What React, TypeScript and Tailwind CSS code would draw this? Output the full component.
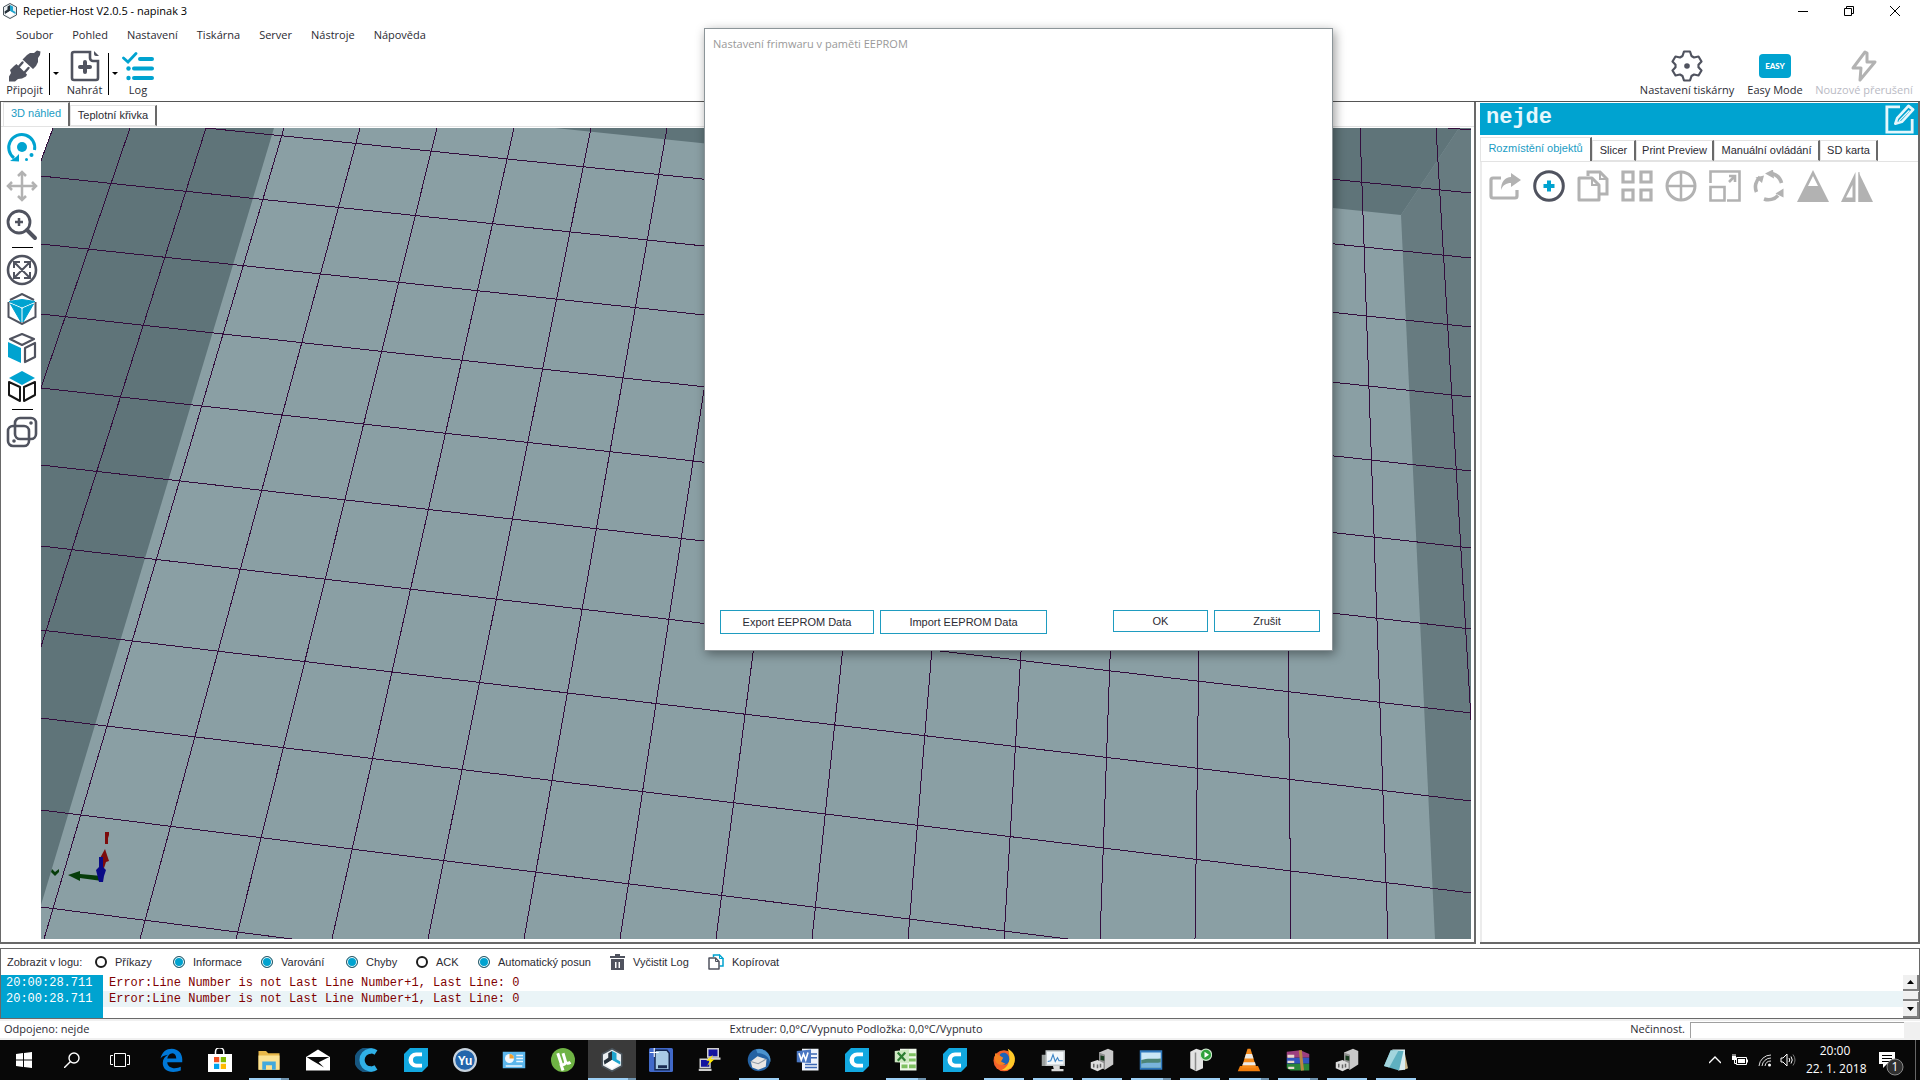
import { useState, type ReactNode } from "react";
import clsx from "clsx";

const DARK = "#50535f";
const BLUE = "#00a3d0";
const GRAY = "#b2b2b2";

/* ---------- toolbar icons ---------- */

function Icon({ children, className = "size-8" }: { children: ReactNode; className?: string }) {
  return (
    <svg viewBox="0 0 32 32" fill="none" className={clsx("shrink-0", className)} aria-hidden="true">
      {children}
    </svg>
  );
}

const PlugIcon = () => (
  <Icon>
    <path d="M13.500 9.500L18 5l3-2h4l3-2.500 3.500 1L31 5l-2 3v4l-2 4-3 3z" fill={DARK} />
    <path d="M7.500 14l10.500 10.500-1 2-4 2-4 .5-3 2.500H0v-5L2 23l-1-3 4-4z" fill={DARK} />
    <path d="M10 16.500l3.500-4M16 22l3.500-4" stroke={DARK} strokeWidth="2.400" strokeLinecap="round" />
  </Icon>
);

const LoadIcon = () => (
  <Icon>
    <path d="M21 2H5a2 2 0 0 0-2 2v24a2 2 0 0 0 2 2h22a2 2 0 0 0 2-2V11h-5a3 3 0 0 1-3-3z" stroke={DARK} strokeWidth="2.600" />
    <path d="M25 1l5 5h-3a2 2 0 0 1-2-2z" fill={DARK} />
    <path d="M16 12v10M11 17h10" stroke={DARK} strokeWidth="4" strokeLinecap="round" />
  </Icon>
);

const LogIcon = () => (
  <Icon>
    <path d="M1.500 8l4.500 4 8-8.500" stroke={BLUE} strokeWidth="2.800" strokeLinecap="round" />
    <path d="M18 9h12M12 18.500h18M12 28h18" stroke={BLUE} strokeWidth="4" strokeLinecap="round" />
    <circle cx="6.500" cy="18.500" r="2.200" fill={BLUE} />
    <circle cx="6.500" cy="28" r="2.200" fill={BLUE} />
  </Icon>
);

const GearIcon = () => (
  <Icon>
    <path
      d="M13 1.500h6l1.500 4.500 2.500 1.500 4.500-1 3 5-3 3.200v2.600l3 3.200-3 5-4.500-1-2.500 1.500-1.500 4.500h-6l-1.500-4.500L9 24.500l-4.500 1-3-5 3-3.200v-2.600l-3-3.200 3-5 4.500 1 2.500-1.500z"
      stroke={DARK}
      strokeWidth="2.200"
      strokeLinejoin="round"
    />
    <circle cx="16" cy="16" r="2.800" fill={DARK} />
  </Icon>
);

const BoltIcon = () => (
  <Icon>
    <path d="M17 2L5 18h8l-1 12 15-18h-8V3z" stroke={GRAY} strokeWidth="3" strokeLinejoin="round" />
  </Icon>
);

const EasyIcon = () => (
  <span className="flex h-8 w-8 items-center justify-center">
    <span className="flex h-6 w-8 items-center justify-center rounded bg-[#00a3d0] font-[Lato,sans-serif] text-[8px] font-black text-white">
      EASY
    </span>
  </span>
);

/* ---------- view icons (left column) ---------- */

const RotateIcon = () => (
  <Icon>
    <path d="M8 27A13 13 0 1 1 28.500 19" stroke={BLUE} strokeWidth="3" />
    <circle cx="16" cy="16" r="5" fill={BLUE} />
    <path d="M4 30l9 .5V23l-3 3z" fill={BLUE} />
    <circle cx="20.500" cy="28.500" r="1.500" fill={BLUE} />
    <circle cx="25.500" cy="24" r="2" fill={BLUE} />
  </Icon>
);

const MoveIcon = () => (
  <Icon>
    <path d="M16 2v28M2 16h28M12 6l4-4 4 4M12 26l4 4 4-4M6 12l-4 4 4 4M26 12l4 4-4 4" stroke={GRAY} strokeWidth="2.500" />
  </Icon>
);

const ZoomIcon = () => (
  <Icon>
    <circle cx="13" cy="13" r="11" stroke={DARK} strokeWidth="2.800" />
    <path d="M13 9v8M9 13h8" stroke={DARK} strokeWidth="2.500" />
    <path d="M21 21l8 8" stroke={DARK} strokeWidth="4" strokeLinecap="round" />
  </Icon>
);

const FitIcon = () => (
  <Icon>
    <circle cx="16" cy="16" r="14" stroke={DARK} strokeWidth="2.600" />
    <path d="M9 9l14 14M23 9L9 23M8 14V8h6M18 8h6v6M24 18v6h-6M14 24H8v-6" stroke={DARK} strokeWidth="2" />
  </Icon>
);

const IsoIcon = () => (
  <Icon>
    <path d="M4 7l12-6 12 6M2.500 9v15L16 31l13.500-7V9" stroke={DARK} strokeWidth="2" />
    <path d="M3 8.500l13-2 13 2L16 14zM4.500 11L15 15.500V29zM27.500 11L17 15.500V29z" fill={BLUE} stroke={BLUE} />
  </Icon>
);

const FrontIcon = () => (
  <Icon>
    <path d="M16 2l12 5-12 6L4 7zM19 16l10-5v14l-10 5z" stroke={DARK} strokeWidth="2.200" strokeLinejoin="round" />
    <path d="M2 10l13 6v15L2 25z" fill={BLUE} />
  </Icon>
);

const TopIcon = () => (
  <Icon>
    <path d="M16 0l13 7-13 7L3 7z" fill={BLUE} />
    <path d="M3 11l11 5v14L3 24zM29 11l-11 5v14l11-6z" stroke="#161616" strokeWidth="2" strokeLinejoin="round" />
  </Icon>
);

const ParallelIcon = () => (
  <Icon>
    <rect x="9" y="2" width="21" height="21" rx="5" stroke={DARK} strokeWidth="2.600" />
    <rect x="2" y="10" width="21" height="20" rx="5" stroke={DARK} strokeWidth="2.600" />
    <circle cx="25" cy="7" r="1.800" fill={DARK} />
    <circle cx="8" cy="25" r="1.800" fill={DARK} />
  </Icon>
);

/* ---------- object icons (right panel) ---------- */

const ShareIcon = () => (
  <Icon>
    <path d="M12 8H4a2 2 0 0 0-2 2v16a2 2 0 0 0 2 2h22a2 2 0 0 0 2-2v-6" stroke={GRAY} strokeWidth="3.200" />
    <path d="M12 20c0-8 4-13 10-13V3l10 7-10 7v-4c-5 0-8 2-10 7z" fill={GRAY} />
  </Icon>
);

const AddIcon = () => (
  <Icon>
    <circle cx="16" cy="16" r="14.300" stroke={DARK} strokeWidth="3" />
    <path d="M16 10.500v11M10.500 16h11" stroke={BLUE} strokeWidth="4" />
  </Icon>
);

function CopyIcon({ back = GRAY, front = GRAY, className }: { back?: string; front?: string; className?: string }) {
  return (
    <Icon className={className}>
      <path d="M11 6V2h12l7 7v15h-7" stroke={back} strokeWidth="3" />
      <path d="M23 1v8h8" stroke={back} strokeWidth="2" />
      <path d="M2 8h13l7 7v15H2z" stroke={front} strokeWidth="3" strokeLinejoin="round" />
      <path d="M15 8v7h7" stroke={front} strokeWidth="2" />
    </Icon>
  );
}

const ArrangeIcon = () => (
  <Icon>
    <path d="M2 2h10v10H2zM20 2h10v10H20zM2 20h10v10H2zM20 20h10v10H20z" stroke={GRAY} strokeWidth="3.200" />
  </Icon>
);

const CenterIcon = () => (
  <Icon>
    <circle cx="16" cy="16" r="14" stroke={GRAY} strokeWidth="3" />
    <path d="M16 2v28M2 16h28" stroke={GRAY} strokeWidth="2.500" />
  </Icon>
);

const ScaleIcon = () => (
  <Icon>
    <path d="M1.500 13V1.500h29v29H18M1.500 17h14v13.500h-14z" stroke={GRAY} strokeWidth="2.600" />
    <path d="M20 12l6-6M20 6h6v6" stroke={GRAY} strokeWidth="2.600" />
  </Icon>
);

const TurnIcon = () => (
  <Icon>
    <path d="M18 3.500A13 13 0 0 1 28.500 13M25 25.500a13 13 0 0 1-14 3.500M3.500 22A13 13 0 0 1 7 7" stroke={GRAY} strokeWidth="3.600" />
    <path d="M12 3.500l8-4 1 9zM30.500 18.500v9l-8-4zM11 5.500L9 13 2.500 7.500z" fill={GRAY} />
  </Icon>
);

const CutIcon = () => (
  <Icon>
    <path d="M16 0L32 32H0zM16 6l-5 10h10z" fill={GRAY} fillRule="evenodd" />
  </Icon>
);

const MirrorIcon = () => (
  <Icon>
    <path d="M17.500 2v30H32z" fill={GRAY} />
    <path d="M14.500 2v30H0zM11.500 15v12.500H5z" fill={GRAY} fillRule="evenodd" />
    <path d="M18 2v30" stroke={GRAY} strokeWidth="1" />
  </Icon>
);

/* ---------- 3D bed ---------- */

// [x1, y1, x2, y2]
const bedLines = [
  [1448, 128, 1471, 130],
  [817, 128, 1471, 193],
  [206, 128, 1471, 258],
  [41, 176, 1471, 327],
  [41, 244, 1471, 397],
  [41, 314, 1471, 471],
  [41, 388, 1471, 548],
  [41, 465, 1471, 629],
  [41, 546, 1471, 713],
  [41, 630, 1471, 801],
  [41, 718, 1471, 893],
  [41, 810, 1068, 939],
  [41, 907, 292, 939],
  [53, 128, -244, 939],
  [130, 128, -148, 939],
  [206, 128, -52, 939],
  [284, 128, 44, 939],
  [360, 128, 140, 939],
  [437, 128, 236, 939],
  [514, 128, 332, 939],
  [591, 128, 428, 939],
  [667, 128, 524, 939],
  [744, 128, 620, 939],
  [821, 128, 716, 939],
  [898, 128, 812, 939],
  [975, 128, 908, 939],
  [1052, 128, 1004, 939],
  [1129, 128, 1100, 939],
  [1206, 128, 1195, 939],
  [1283, 128, 1291, 939],
  [1360, 128, 1388, 939],
  [1436, 128, 1484, 939],
];

function PrintBed() {
  return (
    <svg
      viewBox="41 128 1430 811"
      preserveAspectRatio="xMinYMin slice"
      className="h-full min-w-0 flex-1"
      role="img"
      aria-label="3D náhled"
    >
      <rect x="41" y="128" width="1430" height="811" fill="#8a9fa4" />
      <path d="M41 128H274L41 905z" fill="#5f7479" />
      <path d="M555 128H1459L1401 215z" fill="#5f7479" />
      <path d="M1459 128H1471V939H1435L1401 215z" fill="#677b80" />
      <path d="M41 128H53L41 161z" fill="#fff" />
      <g stroke="#330d3d" strokeWidth="1" shapeRendering="crispEdges">
        {bedLines.map(([x1, y1, x2, y2], i) => (
          <line key={i} x1={x1} y1={y1} x2={x2} y2={y2} />
        ))}
      </g>
      {/* axes */}
      <path d="M80 871l-12 4 12 6v-3l22 3v-5l-22-2z" fill="#063d0a" />
      <path d="M52 869l3 3 4-3v3l-4 4-4-4z" fill="#063d0a" />
      <path d="M105 849l4 12-3 1-2 6-5-1 0-7z" fill="#7d0b0b" />
      <path d="M105 832h4v3l-1 3v6h-3z" fill="#7d0b0b" />
      <path d="M99 857h4v10l3 3-2 6-1 6h-4l-3-12 3-3z" fill="#0a0a86" />
    </svg>
  );
}

/* ---------- window parts ---------- */

const menuItems = ["Soubor", "Pohled", "Nastavení", "Tiskárna", "Server", "Nástroje", "Nápověda"];

function AppLogo({ className }: { className?: string }) {
  return (
    <Icon className={className}>
      <path d="M16 1l13 7v16l-13 7-13-7V8z" fill="#e9eef1" stroke="#4a545c" strokeWidth="2" />
      <path d="M16 4v12L6 22l-1-5 6-4V7z" fill="#26323c" />
      <path d="M16 16V4l6 3v8l5 3v4z" fill="#1ea5cf" />
      <path d="M16 16l9 6-9 6-9-6z" fill="#fff" />
    </Icon>
  );
}

function TitleBar() {
  return (
    <header className="flex h-[22px] shrink-0 items-center pr-[2px] pl-[2px] text-black">
      <AppLogo className="size-4" />
      <h1 className="ml-[5px] flex-1 pt-px">Repetier-Host V2.0.5 - napinak 3</h1>
      <div className="flex">
        <button aria-label="Minimalizovat" className="flex h-5 w-[46px] items-center justify-center">
          <svg width="10" height="10" stroke="#000"><path d="M0 5.500h10" /></svg>
        </button>
        <button aria-label="Obnovit" className="flex h-5 w-[46px] items-center justify-center">
          <svg width="10" height="10" stroke="#000" fill="none"><path d="M.5 2.500h7v7h-7zM2.500 2V.5h7v7H8" /></svg>
        </button>
        <button aria-label="Zavřít" className="flex h-5 w-[46px] items-center justify-center">
          <svg width="10" height="10" stroke="#000"><path d="M0 0l10 10M10 0L0 10" /></svg>
        </button>
      </div>
    </header>
  );
}

function ToolButton({ icon, label, className, disabled }: { icon: ReactNode; label: string; className?: string; disabled?: boolean }) {
  return (
    <button
      disabled={disabled}
      className={clsx("flex flex-col items-center whitespace-nowrap disabled:text-[#b9bac4]", className)}
    >
      {icon}
      <span className="leading-4">{label}</span>
    </button>
  );
}

function SplitArrow({ label }: { label: string }) {
  return (
    <button aria-label={label} className="mt-[3px] flex h-[42px] w-3 items-center justify-end border-l border-black">
      <svg width="8" height="4" className="mr-px"><path d="M1 0h6L4 3z" fill="#000" /></svg>
    </button>
  );
}

function Toolbar() {
  return (
    <div className="flex h-[55px] shrink-0 pt-1">
      <ToolButton icon={<PlugIcon />} label="Připojit" className="w-[49px]" />
      <SplitArrow label="Možnosti připojení" />
      <ToolButton icon={<LoadIcon />} label="Nahrát" className="w-[47px]" />
      <SplitArrow label="Poslední soubory" />
      <ToolButton icon={<LogIcon />} label="Log" className="w-[36px]" />
      <div className="flex-1" />
      <ToolButton icon={<GearIcon />} label="Nastavení tiskárny" className="w-[100px]" />
      <ToolButton icon={<EasyIcon />} label="Easy Mode" className="w-[76px]" />
      <ToolButton icon={<BoltIcon />} label="Nouzové přerušení" className="mr-[5px] w-[102px]" disabled />
    </div>
  );
}

function Tab({ label, active, onClick, className }: { label: string; active: boolean; onClick: () => void; className: string }) {
  return (
    <button
      role="tab"
      aria-selected={active}
      onClick={onClick}
      className={clsx(
        "whitespace-nowrap border-t border-l border-t-[#e3e3e3] border-l-[#e3e3e3] border-r-2 border-r-[#696969] bg-white font-[Liberation_Sans,sans-serif]",
        active ? "h-6 pb-0.5 text-[#1a9cc4]" : "h-[21px] border-b border-b-[#e3e3e3]",
        className,
      )}
    >
      {label}
    </button>
  );
}

const viewTools = [
  { label: "Otáčet", icon: <RotateIcon /> },
  { label: "Posunout", icon: <MoveIcon /> },
  { label: "Přiblížit", icon: <ZoomIcon />, divider: true },
  { label: "Přizpůsobit", icon: <FitIcon /> },
  { label: "Izometrický pohled", icon: <IsoIcon /> },
  { label: "Pohled zepředu", icon: <FrontIcon /> },
  { label: "Pohled shora", icon: <TopIcon />, divider: true },
  { label: "Paralelní projekce", icon: <ParallelIcon /> },
];

function ViewPane() {
  const [tab, setTab] = useState(0);
  return (
    <section className="flex min-w-0 flex-1 flex-col border-r-2 border-b-2 border-l border-[#696969]">
      <div role="tablist" className="flex h-[25px] shrink-0 items-end border-b border-[#e3e3e3] pl-[2px]">
        <Tab label="3D náhled" active={tab === 0} onClick={() => setTab(0)} className="w-[67px]" />
        <Tab label="Teplotní křivka" active={tab === 1} onClick={() => setTab(1)} className="w-[87px]" />
      </div>
      <div className="flex min-h-0 flex-1 pt-px pr-[3px] pb-[3px]">
        <div className="-mt-px flex w-10 shrink-0 flex-col items-center pl-[2px]">
          {viewTools.map((t) => (
            <div key={t.label} className="flex flex-col items-center">
              <button aria-label={t.label} className="flex h-[39px] items-center">{t.icon}</button>
              {t.divider && (
                <div className="flex h-[6px] items-center">
                  <div className="h-px w-[21px] bg-black" />
                </div>
              )}
            </div>
          ))}
        </div>
        <PrintBed />
      </div>
    </section>
  );
}

const objectTabs = [
  { label: "Rozmístění objektů", width: "w-[112px]" },
  { label: "Slicer", width: "w-[44px]" },
  { label: "Print Preview", width: "w-[78px]" },
  { label: "Manuální ovládání", width: "w-[106px]" },
  { label: "SD karta", width: "w-[58px]" },
];

const objectTools = [
  { label: "Exportovat", icon: <ShareIcon /> },
  { label: "Přidat objekt", icon: <AddIcon /> },
  { label: "Kopírovat objekty", icon: <CopyIcon /> },
  { label: "Automatické rozmístění", icon: <ArrangeIcon /> },
  { label: "Vycentrovat", icon: <CenterIcon /> },
  { label: "Změnit měřítko", icon: <ScaleIcon /> },
  { label: "Otočit", icon: <TurnIcon /> },
  { label: "Řez", icon: <CutIcon /> },
  { label: "Zrcadlit", icon: <MirrorIcon /> },
];

function ObjectPane() {
  const [tab, setTab] = useState(0);
  return (
    <section className="flex w-[440px] shrink-0 flex-col border-r-2 border-b-2 border-[#696969]">
      <div className="mt-px flex h-8 shrink-0 items-center bg-[#00a3d0] pl-[6px] text-[#e6f7fc]">
        <h2 className="flex-1 pb-0.5 font-[Liberation_Mono,monospace] text-[22px] leading-7 font-bold">nejde</h2>
        <button aria-label="Upravit tiskárnu" className="mr-[3px]">
          <Icon className="size-[30px]">
            <path d="M16 3H2v27h27V16" stroke="#e6f7fc" strokeWidth="3" />
            <path d="M11 21l2-6L25 2l5 4-12 13z" stroke="#e6f7fc" strokeWidth="2.800" strokeLinejoin="round" />
            <path d="M15 18L26 7" stroke="#e6f7fc" strokeWidth="1.500" />
          </Icon>
        </button>
      </div>
      <div role="tablist" className="flex h-[27px] shrink-0 items-end border-b border-[#e3e3e3]">
        {objectTabs.map((t, i) => (
          <Tab key={t.label} label={t.label} active={tab === i} onClick={() => setTab(i)} className={t.width} />
        ))}
      </div>
      <div className="flex flex-1 items-start gap-3 border-l-2 border-[#ececec] pt-2 pl-[7px]">
        {objectTools.map((t) => (
          <button key={t.label} aria-label={t.label}>{t.icon}</button>
        ))}
      </div>
    </section>
  );
}

const filters = [
  { label: "Příkazy", checked: false, width: "w-[78px]" },
  { label: "Informace", checked: true, width: "w-[88px]" },
  { label: "Varování", checked: true, width: "w-[85px]" },
  { label: "Chyby", checked: true, width: "w-[70px]" },
  { label: "ACK", checked: false, width: "w-[62px]" },
  { label: "Automatický posun", checked: true, width: "w-[132px]" },
];

const logLines = [
  { time: "20:00:28.711", text: "Error:Line Number is not Last Line Number+1, Last Line: 0" },
  { time: "20:00:28.711", text: "Error:Line Number is not Last Line Number+1, Last Line: 0" },
];

function LogPanel() {
  return (
    <section className="mt-1 flex h-[71px] shrink-0 flex-col border border-[#696969]">
      <div className="flex h-[26px] shrink-0 items-center pl-[6px] font-[Liberation_Sans,sans-serif] whitespace-nowrap">
        <span className="w-[88px]">Zobrazit v logu:</span>
        {filters.map((f) => (
          <label key={f.label} className={clsx("flex items-center gap-2", f.width)}>
            <input
              type="checkbox"
              defaultChecked={f.checked}
              className="size-3 shrink-0 appearance-none rounded-full border-2 border-[#1c1c1c] bg-white checked:border checked:border-[#2f5763] checked:bg-[#00a3d0] checked:shadow-[inset_0_0_0_1px_#fff]"
            />
            {f.label}
          </label>
        ))}
        <button className="flex w-[98px] items-center gap-2">
          <svg width="15" height="16" viewBox="0 0 15 16" fill={DARK}>
            <path d="M0 2h5V0h5v2h5v2H0zM1 5h13v11H1zM5 8v6h1.500V8zM8.500 8v6H10V8z" fillRule="evenodd" />
          </svg>
          Vyčistit Log
        </button>
        <button className="flex items-center gap-2">
          <CopyIcon back={BLUE} front={DARK} className="size-4" />
          Kopírovat
        </button>
      </div>
      <div className="flex min-h-0 flex-1">
        <div className="flex flex-1 bg-white font-[Liberation_Mono,monospace] text-[12px] leading-4">
          <div className="w-[102px] shrink-0 bg-[#00a3d0] pl-[5px] text-white">
            {logLines.map((l, i) => (
              <div key={i}>{l.time}</div>
            ))}
          </div>
          <div className="flex-1 text-[#800000]">
            {logLines.map((l, i) => (
              <div key={i} className={clsx("pl-[6px]", i % 2 === 1 && "bg-[#eaf4f7]")}>{l.text}</div>
            ))}
          </div>
        </div>
        <div className="flex w-4 flex-col bg-[#f4f4f4]">
          <button aria-label="Nahoru" className="flex h-4 items-center justify-center border-r-2 border-b-2 border-[#808080] bg-[#f0f0f0]">
            <svg width="7" height="4"><path d="M3.500 0L7 4H0z" /></svg>
          </button>
          <div className="my-px flex-1 border-r border-b-2 border-[#808080] bg-[#f0f0f0]" />
          <button aria-label="Dolů" className="flex h-4 items-center justify-center border-r-2 border-b-2 border-[#808080] bg-[#f0f0f0]">
            <svg width="7" height="4"><path d="M3.500 4L7 0H0z" /></svg>
          </button>
        </div>
      </div>
    </section>
  );
}

function StatusBar() {
  return (
    <footer className="flex h-[21px] shrink-0 items-center border-t-2 border-b-2 border-[#f0f0f0]">
      <span className="w-[38%] pl-1">Odpojeno: nejde</span>
      <span>Extruder: 0,0°C/Vypnuto Podložka: 0,0°C/Vypnuto</span>
      <span className="flex flex-1 items-center justify-end">
        Nečinnost.
        <span className="ml-[5px] h-4 w-[214px] border-t border-l border-[#a0a0a0]" />
        <span className="h-4 w-4 bg-[#f0f0f0]" />
      </span>
    </footer>
  );
}

function EepromDialog() {
  const button = "border border-[#1f9cc0] bg-white pt-px";
  return (
    <div
      role="dialog"
      aria-labelledby="eeprom-title"
      className="absolute top-7 left-[704px] flex h-[623px] w-[629px] flex-col border border-[#8c9599] bg-white shadow-[2px_3px_10px_rgba(0,0,0,0.4)]"
    >
      <h2 id="eeprom-title" className="flex h-[30px] items-center pl-2 text-[#999]">
        Nastavení frimwaru v paměti EEPROM
      </h2>
      <div className="flex-1" />
      <div className="mb-4 flex items-start gap-[6px] pr-3 pl-[15px] font-[Liberation_Sans,sans-serif]">
        <button className={clsx(button, "h-6 w-[154px]")}>Export EEPROM Data</button>
        <button className={clsx(button, "h-6 w-[167px]")}>Import EEPROM Data</button>
        <div className="flex-1" />
        <button className={clsx(button, "h-[22px] w-[95px]")}>OK</button>
        <button className={clsx(button, "h-[22px] w-[106px]")}>Zrušit</button>
      </div>
    </div>
  );
}

/* ---------- taskbar ---------- */

const CuraTile = () => (
  <Icon className="size-6">
    <path d="M8 0h24v24l-8 8H0V8z" fill="#12a8e0" />
    <path d="M24 6v5h-7a5 5 0 0 0 0 10h7v5h-8a10 10 0 0 1 0-20z" fill="#fff" />
  </Icon>
);

const PrinterBox = () => (
  <Icon className="size-6">
    <path d="M12 6l12-5 7 3v18l-11 7-8-5z" fill="#c9c9c9" />
    <path d="M12 6l8 3v20l-8-5z" fill="#8f8f8f" />
    <path d="M14 10l5 1v6l-5-1z" fill="#173a1d" />
    <path d="M1 19l9-3 8 4v7l-8 4-9-4z" fill="#dcdcdc" />
    <path d="M5 21v5M10 22v5M14 21v5" stroke="#666" strokeWidth="2" />
  </Icon>
);

type Task = { name: string; icon: ReactNode; open?: boolean; stacked?: boolean; active?: boolean };

const tasks: Task[] = [
  {
    name: "Edge",
    icon: (
      <Icon className="size-6">
        <path d="M2 14C4 5 10 1 17 1c9 0 14 7 14 14v4H11c0 5 5 8 10 8 3 0 6-1 8-2v5c-3 1-6 2-10 2-9 0-14-5-14-12 0-5 3-9 7-11-6 1-9 3-10 5zM11 14h12c0-4-2-7-5-7-4 0-6 3-7 7z" fill="#0078d7" />
      </Icon>
    ),
  },
  {
    name: "Store",
    icon: (
      <Icon className="size-6">
        <path d="M0 8h32v24H0z" fill="#fff" />
        <path d="M10 8V5a5 5 0 0 1 11 0v3" stroke="#fff" strokeWidth="2" />
        <path d="M8 12h7v7H8z" fill="#f25022" />
        <path d="M17 12h7v7h-7z" fill="#7fba00" />
        <path d="M8 21h7v7H8z" fill="#00a4ef" />
        <path d="M17 21h7v7h-7z" fill="#ffb900" />
      </Icon>
    ),
  },
  {
    name: "Průzkumník souborů",
    open: true,
    stacked: true,
    icon: (
      <Icon className="size-6">
        <path d="M2 4h10l3 3h15v22H2z" fill="#e8b84a" />
        <path d="M2 10h28v19H2z" fill="#fbe294" />
        <path d="M7 29V18h18v11h-5v-6h-8v6z" fill="#42a9dd" />
      </Icon>
    ),
  },
  {
    name: "Pošta",
    icon: (
      <Icon className="size-6">
        <path d="M0 12L16 2l16 10v18H0z" fill="#fff" />
        <path d="M1 12h30L17 19l7 7L7 16z" fill="#0a0a0a" />
      </Icon>
    ),
  },
  {
    name: "Cura",
    icon: (
      <Icon className="size-6">
        <path d="M23 5a13 13 0 1 0 0 22" stroke="#17567f" strokeWidth="8" />
        <path d="M28 6a12 12 0 1 0 0 20" stroke="#2fb0e6" strokeWidth="7" />
      </Icon>
    ),
  },
  { name: "Ultimaker Cura", icon: <CuraTile /> },
  {
    name: "YU",
    icon: (
      <Icon className="size-6">
        <circle cx="16" cy="16" r="14.500" fill="#2465ab" stroke="#c7d3de" strokeWidth="3" />
        <text x="16" y="22" textAnchor="middle" fontSize="16" fontWeight="700" fill="#fff" fontFamily="Liberation Sans, sans-serif">Yu</text>
      </Icon>
    ),
  },
  {
    name: "Ovládací panely",
    icon: (
      <Icon className="size-6">
        <path d="M1 5h30v22H1z" fill="#5bb6ec" />
        <circle cx="10" cy="14" r="6" fill="#f3f7fb" />
        <path d="M10 14V8a6 6 0 0 1 6 6z" fill="#f0a030" />
        <path d="M19 10h9M19 14h9M19 18h9M5 24h22" stroke="#e9f5fd" strokeWidth="2" />
      </Icon>
    ),
  },
  {
    name: "uTorrent",
    icon: (
      <Icon className="size-6">
        <circle cx="16" cy="16" r="16" fill="#6fb344" />
        <path d="M9 7l5 15c4 1 6-1 5-5l-3-10M19 17c1 4 4 4 7 2M13 21l3 9" stroke="#fff" strokeWidth="4" />
      </Icon>
    ),
  },
  { name: "Repetier-Host", icon: <AppLogo className="size-6" />, open: true, stacked: true, active: true },
  {
    name: "SD Formatter",
    icon: (
      <Icon className="size-6">
        <rect width="32" height="32" rx="2" fill="#4169c9" />
        <path d="M8 3h16l3 4v22H8z" fill="#a9cbe4" stroke="#16284f" strokeWidth="2" />
        <path d="M12 23h12v4H12z" fill="#1b2c50" />
        <path d="M7 0v12M1 6h12" stroke="#fff" strokeWidth="1.500" />
      </Icon>
    ),
  },
  {
    name: "PuTTY",
    icon: (
      <Icon className="size-6">
        <path d="M13 1h14v11H13zM3 15h13v11H3z" fill="#1414a0" stroke="#d0d0d0" strokeWidth="2" />
        <path d="M13 14h17M1 29h17" stroke="#cfcfcf" strokeWidth="3" />
        <path d="M20 9l-9 8h5l-4 7 10-9h-5z" fill="#ffe800" />
      </Icon>
    ),
  },
  {
    name: "Thunderbird",
    open: true,
    icon: (
      <Icon className="size-6">
        <circle cx="16" cy="16" r="15" fill="#2462a3" />
        <path d="M12 2a15 15 0 0 1 19 17c-2-8-8-12-17-12z" fill="#4b93ce" />
        <path d="M5 18l9-7 12 4-1 10-10 4-8-3z" fill="#e8e6e4" />
        <path d="M5 18l10 3 10-6" stroke="#8d9aa6" strokeWidth="1.500" />
      </Icon>
    ),
  },
  {
    name: "Word",
    icon: (
      <Icon className="size-6">
        <path d="M8 1h22v29H8z" fill="#eff4fb" />
        <path d="M20 8h8M20 13h8M12 22h16M12 26h16" stroke="#3d68b3" strokeWidth="2" />
        <path d="M1 4l19-2v18L1 19z" fill="#4a77c2" />
        <path d="M4 7l3 9 3-8 3 8 3-10" stroke="#fff" strokeWidth="2.200" />
      </Icon>
    ),
  },
  { name: "Ultimaker Cura 2", icon: <CuraTile /> },
  {
    name: "Excel",
    open: true,
    stacked: true,
    icon: (
      <Icon className="size-6">
        <path d="M8 1h22v29H8z" fill="#eff8ea" />
        <path d="M20 7h9v4h-9zM20 14h9v4h-9zM10 22h8v5h-8zM20 22h9v5h-9z" fill="#7fc061" />
        <path d="M1 4l19-2v18L1 19z" fill="#cfe8c2" />
        <path d="M5 6l10 11M15 6L5 17" stroke="#2d7d32" strokeWidth="3" />
      </Icon>
    ),
  },
  { name: "Ultimaker Cura 3", icon: <CuraTile /> },
  {
    name: "Firefox",
    open: true,
    icon: (
      <Icon className="size-6">
        <circle cx="16" cy="17" r="14" fill="#f4622a" />
        <path d="M21 1c8 4 11 11 9 18-2 8-10 12-17 10 9-3 13-14 8-28z" fill="#ffc928" />
        <path d="M11 8c5-4 12-1 12 7 0 6-6 9-10 7l-4-5z" fill="#1c63b8" />
        <path d="M4 7l6 3 5 3-3 5 6 3c-6 4-14 0-14-6z" fill="#f58220" />
      </Icon>
    ),
  },
  {
    name: "Sledování prostředků",
    open: true,
    icon: (
      <Icon className="size-6">
        <path d="M1 9h11v15H1z" fill="#9a9f9d" />
        <path d="M7 4h24v19H7z" fill="#f3f7fa" stroke="#c2c7c9" strokeWidth="2" />
        <path d="M9 18l4-1 3-8 3 9 3-5 2 4h5" stroke="#3f86c6" strokeWidth="1.500" />
        <path d="M16 24h9v4h5v3H14v-3h3z" fill="#dadada" />
      </Icon>
    ),
  },
  { name: "Tiskový server", open: true, icon: <PrinterBox /> },
  {
    name: "Fotky",
    open: true,
    stacked: true,
    icon: (
      <Icon className="size-6">
        <path d="M1 3h30v26H1z" fill="#2f78bd" />
        <path d="M3 6h26v20H3z" fill="#c9e6f6" />
        <path d="M3 16c8-3 15-1 26-2v12H3z" fill="#4d8577" />
        <path d="M3 21c9-3 18 0 26-2v7H3z" fill="#79b4dc" />
      </Icon>
    ),
  },
  {
    name: "Spuštění serveru",
    open: true,
    icon: (
      <Icon className="size-6">
        <path d="M3 5l8-4 9 3v23l-9 4-8-4z" fill="#e3e3e3" />
        <path d="M10 6v24" stroke="#8b8b8b" strokeWidth="2" />
        <circle cx="24" cy="9" r="7.500" fill="#2da13b" stroke="#cfe9cf" strokeWidth="1.500" />
        <path d="M22 5l6 4-6 4z" fill="#fff" />
      </Icon>
    ),
  },
  {
    name: "VLC",
    open: true,
    stacked: true,
    icon: (
      <Icon className="size-6">
        <path d="M4 24h24l3 7H1z" fill="#f07d0c" />
        <path d="M14 1h4l8 26H6z" fill="#f58a1a" />
        <path d="M12 8h8l2 6H10zM9 19h15l1 4H7z" fill="#eceae6" />
      </Icon>
    ),
  },
  {
    name: "WinRAR",
    open: true,
    stacked: true,
    icon: (
      <Icon className="size-6">
        <path d="M1 5l18-2 12 5v5H1z" fill="#9c3f7f" />
        <path d="M1 13h30v8H1z" fill="#3355c0" />
        <path d="M1 21h30v9H6l-5-3z" fill="#29863a" />
        <path d="M2 9h9v4H2zM2 17h9v3H2zM3 25h8v3H3z" fill="#ead9cf" />
        <path d="M19 3l3 27" stroke="#b98742" strokeWidth="4" />
      </Icon>
    ),
  },
  { name: "Tiskový server 2", open: true, icon: <PrinterBox /> },
  {
    name: "Poznámkový blok",
    open: true,
    icon: (
      <Icon className="size-6">
        <path d="M27 3l5 24-5 2z" fill="#c8b68c" />
        <path d="M11 2h17v27l-9 1z" fill="#d9ecef" />
        <path d="M9 3l17 1-6 26L0 24z" fill="#5fb0c0" />
        <path d="M9 3l10 1L7 26l-7-2z" fill="#a2d5dd" />
      </Icon>
    ),
  },
];

function Taskbar() {
  const base = "flex h-10 w-12 shrink-0 items-center justify-center";
  return (
    <nav className="flex h-10 shrink-0 items-center bg-[#080808] text-white">
      <button aria-label="Start" className={base}>
        <svg width="16" height="16" viewBox="0 0 16 16" fill="#fff">
          <path d="M0 2l7-1v6.500H0zM8 1l8-1v7.500H8zM0 8.500h7V15l-7-1zM8 8.500h8V16l-8-1z" />
        </svg>
      </button>
      <button aria-label="Hledat" className={base}>
        <svg width="16" height="16" fill="none" stroke="#fff" strokeWidth="1.400">
          <circle cx="10" cy="6" r="5" />
          <path d="M6.500 9.500L0 16" />
        </svg>
      </button>
      <button aria-label="Zobrazení úloh" className={base}>
        <svg width="20" height="14" fill="none" stroke="#fff">
          <path d="M4.500.5h11v13h-11zM3 2.500H.5v9H3M17 2.500h2.500v9H17" />
        </svg>
      </button>
      <div className="ml-[3px] flex gap-px">
        {tasks.map((t) => (
          <button key={t.name} aria-label={t.name} className={clsx(base, "relative", t.active && "bg-[#3a3a3a]")}>
            {t.icon}
            {t.open && (
              <span className={clsx("absolute bottom-0 flex h-[2px]", t.active ? "inset-x-0" : "inset-x-1")}>
                <span className="flex-1 bg-[#9ccff5]" />
                {t.stacked && <span className="w-2 bg-[#6f93ae]" />}
              </span>
            )}
          </button>
        ))}
      </div>
      <div className="flex-1" />
      <div className="flex items-center">
        <button aria-label="Skryté ikony" className="w-[22px]">
          <svg width="12" height="8" fill="none" stroke="#fff" strokeWidth="1.400"><path d="M0 7l6-6 6 6" /></svg>
        </button>
        <svg width="17" height="13" fill="none" stroke="#fff" className="mr-[10px]" aria-label="Baterie">
          <path d="M5.500 3.500h10v7h-10zM16.500 5.500v3" />
          <path d="M7 5h7v4H7zM1 2h4v4H1z" fill="#fff" stroke="none" />
          <path d="M2 0v2M4 0v2M3.500 6v3.500H5" />
        </svg>
        <svg width="14" height="14" fill="none" stroke="#ddd" className="mr-[8px]" aria-label="Síť">
          <path d="M1 13A12 12 0 0 1 13 2M4 13a9 9 0 0 1 9-8M7 13a6 6 0 0 1 6-5" />
          <circle cx="11.500" cy="12" r="1.500" fill="#fff" stroke="none" />
        </svg>
        <svg width="17" height="14" fill="none" stroke="#fff" className="mr-[9px]" aria-label="Hlasitost">
          <path d="M1 5h2l4-4v12L3 9H1zM9 5q1.500 2 0 4M11 3.500q2.500 3.500 0 7" />
          <path d="M13 1.500q4 5.500 0 11" stroke="#777" />
        </svg>
        <time className="w-[58px] text-center text-[12px] leading-[18px] whitespace-nowrap">
          20:00
          <br />
          22. 1. 2018
        </time>
        <button aria-label="Oznámení" className="relative ml-[14px] h-10 w-[37px]">
          <svg width="26" height="26" viewBox="0 0 26 26" className="absolute top-[11px] left-0">
            <path d="M1 1h16v12H9l-4 4v-4H1z" fill="#fff" />
            <path d="M4 4.500h10M4 7.500h10M4 10.500h10" stroke="#000" />
            <circle cx="17" cy="16" r="8" fill="#303030" stroke="#8a8a8a" />
            <text x="17" y="20" textAnchor="middle" fontSize="12" fill="#fff" fontFamily="Open Sans, sans-serif">1</text>
          </svg>
        </button>
        <div className="h-10 w-[5px] border-l border-[#666]" />
      </div>
    </nav>
  );
}

export default function App() {
  return (
    <div className="relative flex h-screen flex-col overflow-hidden bg-white font-[Open_Sans,Noto_Sans,sans-serif] text-[11px] text-[#2b2b33]">
      <TitleBar />
      <nav className="flex h-6 shrink-0 items-center gap-[19px] pt-[2px] pl-4">
        {menuItems.map((m) => (
          <button key={m}>{m}</button>
        ))}
      </nav>
      <Toolbar />
      <main className="flex min-h-0 flex-1 gap-1 border-t border-[#555]">
        <ViewPane />
        <ObjectPane />
      </main>
      <LogPanel />
      <StatusBar />
      <Taskbar />
      <EepromDialog />
    </div>
  );
}
